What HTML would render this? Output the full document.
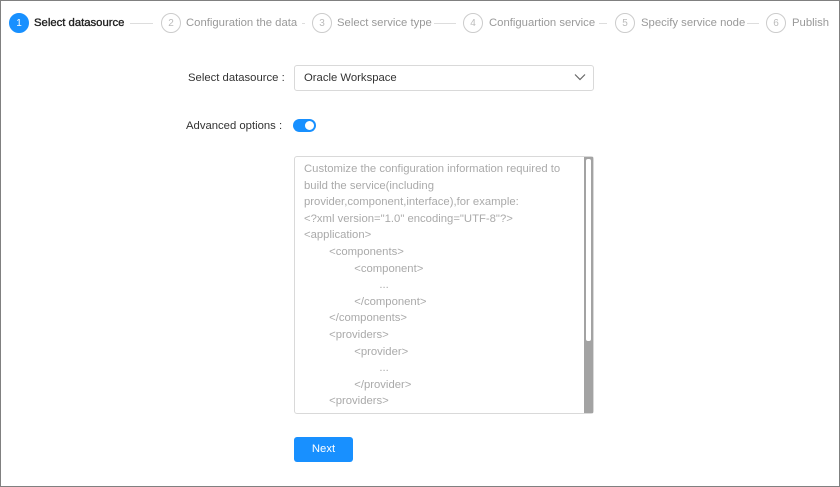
<!DOCTYPE html><html><head><style>
body{margin:0;width:840px;height:487px;overflow:hidden;font-family:"Liberation Sans",sans-serif;background:#fff}
.frame{position:absolute;left:0;top:0;width:838px;height:485px;border:1px solid #808080}
.a{position:absolute}
.c{position:absolute;width:20px;height:20px;border-radius:50%;box-sizing:border-box;border:1px solid #ccc;color:#bbb;font-size:10px;text-align:center;line-height:19px;top:13px}
.t{position:absolute;top:17px;font-size:11.3px;color:#999;white-space:nowrap}
.l{position:absolute;top:23px;height:1px;background:#ddd}
.ta{font-size:11.3px;color:#aaa;line-height:16.6px;white-space:pre}
</style></head><body><div class="frame"></div>
<div class="c" style="left:9px;background:#1890ff;border-color:#1890ff;color:#fff">1</div>
<div class="t" style="left:34px;color:#222;font-size:11.3px;-webkit-text-stroke:0.35px #222">Select datasource</div>
<div class="l" style="left:130px;width:23px"></div>
<div class="c" style="left:161px">2</div><div class="t" style="left:186px">Configuration the data</div>
<div class="l" style="left:302px;width:3px"></div>
<div class="c" style="left:312px">3</div><div class="t" style="left:337px">Select service type</div>
<div class="l" style="left:434px;width:22px"></div>
<div class="c" style="left:463px">4</div><div class="t" style="left:489px">Configuartion service</div>
<div class="l" style="left:599px;width:8px"></div>
<div class="c" style="left:615px">5</div><div class="t" style="left:641px">Specify service node</div>
<div class="l" style="left:747px;width:12px"></div>
<div class="c" style="left:766px">6</div><div class="t" style="left:792px">Publish</div>
<div class="a" style="left:188px;top:72px;font-size:11.3px;color:#333">Select datasource&nbsp;:</div>
<div class="a" style="left:294px;top:65px;width:298px;height:24px;border:1px solid #d9d9d9;border-radius:3px"></div>
<div class="a" style="left:304px;top:72px;font-size:11.3px;color:#333">Oracle Workspace</div>
<svg class="a" style="left:574px;top:73px" width="12" height="8"><path d="M1 1.5l5 5 5-5" fill="none" stroke="#666" stroke-width="1.2"/></svg>
<div class="a" style="left:186px;top:120px;font-size:11.3px;color:#333">Advanced options&nbsp;:</div>
<div class="a" style="left:293px;top:119px;width:23px;height:13px;border-radius:7px;background:#1890ff"></div>
<div class="a" style="left:305px;top:121px;width:9px;height:9px;border-radius:50%;background:#fff"></div>
<div class="a" style="left:294px;top:156px;width:298px;height:256px;border:1px solid #d9d9d9;border-radius:3px"></div>
<div class="a ta" style="left:304px;top:161px">Customize the configuration information required to
build the service(including
provider,component,interface),for example:
&lt;?xml version="1.0" encoding="UTF-8"?&gt;
&lt;application&gt;
        &lt;components&gt;
                &lt;component&gt;
                        ...
                &lt;/component&gt;
        &lt;/components&gt;
        &lt;providers&gt;
                &lt;provider&gt;
                        ...
                &lt;/provider&gt;
        &lt;providers&gt;</div>
<div class="a" style="left:584px;top:157px;width:9px;height:256px;background:#a3a3a3"></div>
<div class="a" style="left:586px;top:159px;width:5px;height:182px;background:#fff;border-radius:2px"></div>
<div class="a" style="left:294px;top:437px;width:59px;height:25px;background:#1890ff;border-radius:3px;color:#fff;font-size:11.3px;text-align:center;line-height:25px">Next</div>
</body></html>
